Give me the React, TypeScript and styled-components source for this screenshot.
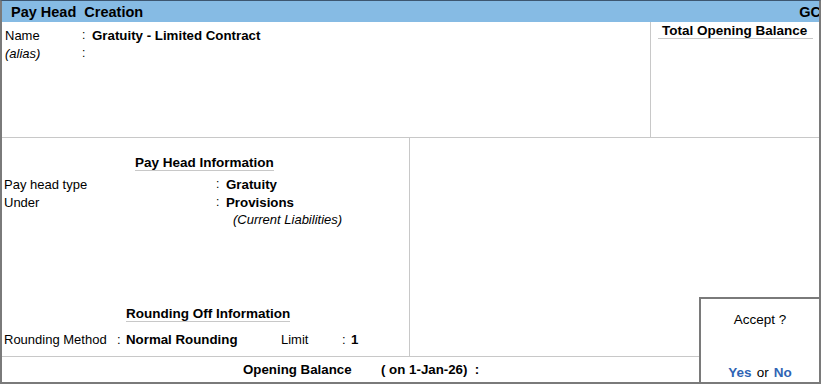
import styled, { createGlobalStyle } from "styled-components";

const GlobalStyle = createGlobalStyle`
  html, body {
    margin: 0;
    padding: 0;
    background: #ffffff;
  }
  body {
    font-family: "Liberation Sans", Arial, sans-serif;
    color: #000000;
  }
  * {
    box-sizing: border-box;
  }
`;

const Frame = styled.div`
  position: relative;
  width: 821px;
  height: 384px;
  display: flex;
  flex-direction: column;
  border-top: 1px solid #3d5670;
  border-left: 2px solid #7a7a7a;
  border-right: 2px solid #7a7a7a;
  border-bottom: 2px solid #7a7a7a;
  overflow: hidden;
`;

const TitleBar = styled.div`
  height: 21px;
  flex: none;
  display: flex;
  align-items: center;
  justify-content: space-between;
  background: #86bbe4;
  padding: 0 0 0 9px;
  font-size: 14.5px;
  font-weight: bold;
  white-space: pre;
`;

const Clipped = styled.span`
  margin-right: -2px;
`;

const TopSection = styled.div`
  height: 116px;
  flex: none;
  display: flex;
  border-bottom: 1px solid #c8c8c8;
`;

const NameBlock = styled.div`
  flex: 1;
  padding: 4px 0 0 3px;
`;

const FieldRow = styled.div<{ $labelWidth: number; $height?: number }>`
  display: grid;
  grid-template-columns: ${({ $labelWidth }) => $labelWidth}px 10px auto;
  align-items: center;
  height: ${({ $height }) => $height ?? 18}px;
  font-size: 13px;
`;

const Label = styled.span<{ $italic?: boolean }>`
  font-style: ${({ $italic }) => ($italic ? "italic" : "normal")};
`;

const Colon = styled.span`
  font-size: 12px;
`;

const Value = styled.span`
  font-size: 13.3px;
  font-weight: bold;
`;

const BalancePanel = styled.div`
  width: 169px;
  flex: none;
  border-left: 1px solid #c8c8c8;
  padding: 1px 6px 0 7px;
`;

const PanelHeading = styled.div`
  font-size: 13.5px;
  font-weight: bold;
  padding-left: 4px;
  line-height: 15px;
  border-bottom: 1px solid #c8c8c8;
`;

const MiddleSection = styled.div`
  height: 219px;
  flex: none;
  display: flex;
  border-bottom: 1px solid #c8c8c8;
`;

const InfoColumn = styled.div`
  width: 408px;
  flex: none;
  display: flex;
  flex-direction: column;
  border-right: 1px solid #c8c8c8;
  padding: 17px 0 8px 2px;
`;

const SectionHeading = styled.div<{ $offset: number; $gap: number }>`
  align-self: flex-start;
  margin-left: ${({ $offset }) => $offset}px;
  margin-bottom: ${({ $gap }) => $gap}px;
  font-size: 13.5px;
  font-weight: bold;
  line-height: 15px;
  border-bottom: 1px solid #c8c8c8;
`;

const Note = styled.div`
  font-size: 13px;
  font-style: italic;
  padding-left: 229px;
  height: 17px;
  line-height: 17px;
`;

const RoundingBlock = styled.div`
  margin-top: auto;
  display: flex;
  flex-direction: column;
`;

const RoundingRow = styled.div`
  display: flex;
  align-items: center;
  height: 18px;
  white-space: pre;
`;

const Cell = styled.span<{ $width?: number; $bold?: boolean }>`
  width: ${({ $width }) => ($width ? `${$width}px` : "auto")};
  font-size: ${({ $bold }) => ($bold ? 13.3 : 13)}px;
  font-weight: ${({ $bold }) => ($bold ? "bold" : "normal")};
`;

const BalanceRow = styled.div`
  flex: 1;
  display: flex;
  align-items: center;
  padding-left: 241px;
  font-size: 13.3px;
  font-weight: bold;
  white-space: pre;
`;

const AcceptBox = styled.div`
  position: absolute;
  right: -2px;
  bottom: -2px;
  width: 122px;
  height: 87px;
  background: #ffffff;
  border: 2px solid #7a7a7a;
  display: flex;
  flex-direction: column;
  align-items: center;
  justify-content: space-between;
  padding: 13px 0 2px 0;
  font-size: 13.5px;
`;

const Choice = styled.span`
  color: #2f64b4;
  font-weight: bold;
`;

const Or = styled.span`
  margin: 0 5px;
`;

export default function App() {
  return (
    <>
      <GlobalStyle />
      <Frame>
        <TitleBar>
          <span>Pay Head  Creation</span>
          <Clipped>GC</Clipped>
        </TitleBar>
        <TopSection>
          <NameBlock>
            <FieldRow $labelWidth={77}>
              <Label>Name</Label>
              <Colon>:</Colon>
              <Value>Gratuity - Limited Contract</Value>
            </FieldRow>
            <FieldRow $labelWidth={77}>
              <Label $italic>(alias)</Label>
              <Colon>:</Colon>
              <span />
            </FieldRow>
          </NameBlock>
          <BalancePanel>
            <PanelHeading>Total Opening Balance</PanelHeading>
          </BalancePanel>
        </TopSection>
        <MiddleSection>
          <InfoColumn>
            <SectionHeading $offset={131} $gap={4}>
              Pay Head Information
            </SectionHeading>
            <FieldRow $labelWidth={212}>
              <Label>Pay head type</Label>
              <Colon>:</Colon>
              <Value>Gratuity</Value>
            </FieldRow>
            <FieldRow $labelWidth={212}>
              <Label>Under</Label>
              <Colon>:</Colon>
              <Value>Provisions</Value>
            </FieldRow>
            <Note>(Current Liabilities)</Note>
            <RoundingBlock>
              <SectionHeading $offset={122} $gap={8}>
                Rounding Off Information
              </SectionHeading>
              <RoundingRow>
                <Cell $width={113}>Rounding Method</Cell>
                <Cell $width={9}>:</Cell>
                <Cell $width={155} $bold>Normal Rounding</Cell>
                <Cell $width={61}>Limit</Cell>
                <Cell $width={9}>:</Cell>
                <Cell $bold>1</Cell>
              </RoundingRow>
            </RoundingBlock>
          </InfoColumn>
        </MiddleSection>
        <BalanceRow>
          <Cell $width={138} $bold>Opening Balance</Cell>
          <Cell $bold>( on 1-Jan-26)  :</Cell>
        </BalanceRow>
        <AcceptBox>
          <span>Accept ?</span>
          <span>
            <Choice>Yes</Choice>
            <Or>or</Or>
            <Choice>No</Choice>
          </span>
        </AcceptBox>
      </Frame>
    </>
  );
}
